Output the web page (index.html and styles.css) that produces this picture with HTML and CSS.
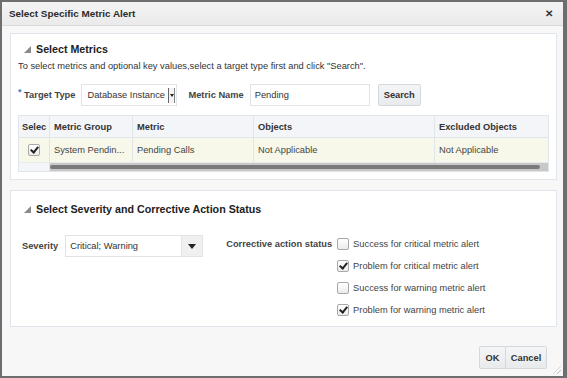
FILE: index.html
```html
<!DOCTYPE html>
<html>
<head>
<meta charset="utf-8">
<link rel="stylesheet" href="styles.css">
</head>
<body>
<div class="dialog">
  <div class="titlebar">
    <span class="title">Select Specific Metric Alert</span>
    <span class="close">&#x2715;</span>
  </div>
  <div class="body">
    <section class="panel p1">
      <h2 class="ph"><span class="tri"></span>Select Metrics</h2>
      <p class="desc">To select metrics and optional key values,select a target type first and click "Search".</p>
      <div class="formrow">
        <label class="lbl"><span class="req">*</span> Target Type</label>
        <div class="sel1"><span>Database Instance</span><span class="sbtn"><span class="arr"></span></span></div>
        <label class="lbl ml">Metric Name</label>
        <div class="inp">Pending</div>
        <button class="btn search">Search</button>
      </div>
      <div class="table">
        <div class="tr th">
          <div class="c c1">Selec</div>
          <div class="c c2">Metric Group</div>
          <div class="c c3">Metric</div>
          <div class="c c4">Objects</div>
          <div class="c c5">Excluded Objects</div>
        </div>
        <div class="tr td">
          <div class="c c1"><span class="cb on"></span></div>
          <div class="c c2">System Pendin...</div>
          <div class="c c3">Pending Calls</div>
          <div class="c c4">Not Applicable</div>
          <div class="c c5">Not Applicable</div>
        </div>
        <div class="sbrow">
          <div class="sbl"></div>
          <div class="sbtrack"><div class="sbthumb"></div></div>
        </div>
      </div>
    </section>
    <section class="panel p2">
      <h2 class="ph"><span class="tri"></span>Select Severity and Corrective Action Status</h2>
      <div class="sevrow">
        <div class="sevleft">
          <label class="lbl">Severity</label>
          <div class="sel2"><span class="val">Critical; Warning</span><span class="dbtn"><span class="arr2"></span></span></div>
        </div>
        <div class="corr">
          <label class="lbl">Corrective action status</label>
          <div class="opts">
            <div class="opt"><span class="cb"></span>Success for critical metric alert</div>
            <div class="opt"><span class="cb on"></span>Problem for critical metric alert</div>
            <div class="opt"><span class="cb"></span>Success for warning metric alert</div>
            <div class="opt"><span class="cb on"></span>Problem for warning metric alert</div>
          </div>
        </div>
      </div>
    </section>
    <div class="footer">
      <button class="btn ok">OK</button><button class="btn cancel">Cancel</button>
    </div>
  </div>
  <div class="grip"></div>
</div>
</body>
</html>
```
FILE: styles.css
```css
* { box-sizing: border-box; }
html, body { margin: 0; padding: 0; }
body {
  width: 567px; height: 378px;
  background: #6e6e6e;
  font-family: "Liberation Sans", Arial, sans-serif;
  font-size: 9.3px;
  color: #333;
  overflow: hidden;
}
.dialog {
  position: relative;
  margin: 2px 4px 2px 2px;
  height: 374px;
  background: #f7f7f7;
  display: flex;
  flex-direction: column;
}
.titlebar {
  height: 24px;
  flex: none;
  background: linear-gradient(#f4f4f4, #eaeaea);
  border-bottom: 1px solid #d6dbe0;
  display: flex;
  align-items: center;
  justify-content: space-between;
  padding: 0 10px 0 7px;
}
.title { font-weight: bold; font-size: 9.9px; color: #2b2b2b; }
.close { font-weight: bold; font-size: 10px; color: #333; }
.body { padding: 7px 6px 0 8px; display: flex; flex-direction: column; }
.panel {
  background: #fff;
  border: 1px solid #dfe5ea;
}
.p1 { height: 147px; padding: 0 8px 0 7px; }
.p2 { height: 137px; margin-top: 10px; padding: 0 8px 0 12px; }
.ph {
  margin: 0;
  font-size: 10.7px;
  font-weight: bold;
  color: #222;
  display: flex;
  align-items: center;
  height: 14px;
}
.p1 .ph { margin-top: 8px; padding-left: 6px; }
.p2 .ph { margin-top: 11px; padding-left: 1px; }
.tri {
  width: 0; height: 0;
  border-left: 7px solid transparent;
  border-bottom: 7px solid #8a8a8a;
  margin-right: 5px;
}
.desc { margin: 4px 0 0 0; line-height: 12px; color: #333; }
.formrow { display: flex; align-items: center; margin-top: 12px; height: 22px; }
.lbl { font-weight: bold; color: #444; white-space: nowrap; }
.req { color: #3b7bc8; font-size: 9px; position: relative; top: -3px; }
.ml { margin-left: 11px; }
.sel1 {
  margin-left: 6px;
  width: 96px; height: 22px;
  border: 1px solid #e0e4e8;
  display: flex; align-items: center; justify-content: space-between;
  padding-left: 5px;
  color: #333;
}
.sbtn {
  width: 7px;
  height: 15px;
  border-left: 1px solid #666;
  border-right: 1px solid #888;
  background: #f3f3f3;
  display: flex; align-items: center; justify-content: center;
  margin-right: 1px;
}
.arr { border-left: 2px solid transparent; border-right: 2px solid transparent; border-top: 3px solid #222; }
.inp {
  margin-left: 6px;
  width: 120px; height: 22px;
  border: 1px solid #e0e4e8;
  display: flex; align-items: center;
  padding-left: 4px;
  color: #333;
}
.btn {
  font-family: "Liberation Sans", Arial, sans-serif;
  font-weight: bold; font-size: 9.3px; color: #333;
  background: linear-gradient(#f4f5f6, #e8eaec);
  border: 1px solid #d3d8dd;
  border-radius: 2px;
  height: 23px;
  padding: 0;
  cursor: default;
}
.search { margin-left: 8px; width: 43px; height: 22px; }
.table { margin-top: 9px; border: 1px solid #dfe5ea; width: 531px; }
.tr { display: flex; }
.c {
  border-right: 1px solid #e0e5ea;
  display: flex; align-items: center;
  padding-left: 4px;
  white-space: nowrap; overflow: hidden;
}
.c5 { border-right: none; }
.th { height: 22px; background: #f3f5f8; border-bottom: 1px solid #e0e5ea; }
.th .c { font-weight: bold; color: #333; }
.td { height: 24px; background: #f7f8e9; color: #444; }
.c1 { width: 31px; }
.c2 { width: 83px; }
.c3 { width: 121px; }
.c4 { width: 181px; }
.c5 { flex: 1; }
.th .c1 { padding-left: 3px; }
.td .c1 { justify-content: center; padding-left: 0; }
.sbrow { display: flex; height: 9px; border-top: 1px solid #e8ecef; }
.sbl { width: 31px; border-right: 1px solid #e0e5ea; background: #f3f5f8; }
.sbtrack { flex: 1; background: #c8c8c8; padding: 2px 8px 1px 0; }
.sbthumb { height: 4px; background: #7a7a7a; border-radius: 3px; }
.cb {
  display: inline-block;
  width: 12px; height: 12px;
  border: 1px solid #a8a8a8;
  border-radius: 2px;
  background: linear-gradient(#fff, #ececec);
  position: relative;
  flex: none;
}
.cb.on::after {
  content: "";
  position: absolute;
  left: 3px; top: 0px;
  width: 3px; height: 6px;
  border-right: 2px solid #222;
  border-bottom: 2px solid #222;
  transform: rotate(40deg);
}
.sevrow { display: flex; margin-top: 19px; }
.sevleft { display: flex; align-items: center; height: 22px; margin-left: -1px; }
.sel2 {
  margin-left: 7px;
  width: 138px; height: 22px;
  border: 1px solid #e0e4e8;
  display: flex; align-items: center; justify-content: space-between;
  padding-left: 4px;
}
.dbtn {
  width: 21px; height: 20px;
  background: #f0f0f0;
  border-left: 1px solid #e0e4e8;
  display: flex; align-items: center; justify-content: center;
}
.arr2 { border-left: 4px solid transparent; border-right: 4px solid transparent; border-top: 5px solid #222; }
.corr { display: flex; margin-left: 23px; }
.corr .lbl { height: 14px; line-height: 14px; margin-top: 2px; }
.opts { margin-left: 5px; display: flex; flex-direction: column; gap: 8px; margin-top: 2px; }
.opt { display: flex; align-items: center; gap: 4px; height: 14px; color: #444; }
.footer { display: flex; justify-content: flex-end; margin-top: 19px; padding-right: 10px; }
.ok { width: 27px; border-radius: 2px 0 0 2px; }
.cancel { width: 41px; border-left: none; border-radius: 0 2px 2px 0; }
.grip {
  position: absolute; right: 2px; bottom: 2px;
  width: 8px; height: 8px;
  background: repeating-linear-gradient(135deg, transparent 0 2px, #bbb 2px 3px);
  clip-path: polygon(100% 0, 100% 100%, 0 100%);
}
```
